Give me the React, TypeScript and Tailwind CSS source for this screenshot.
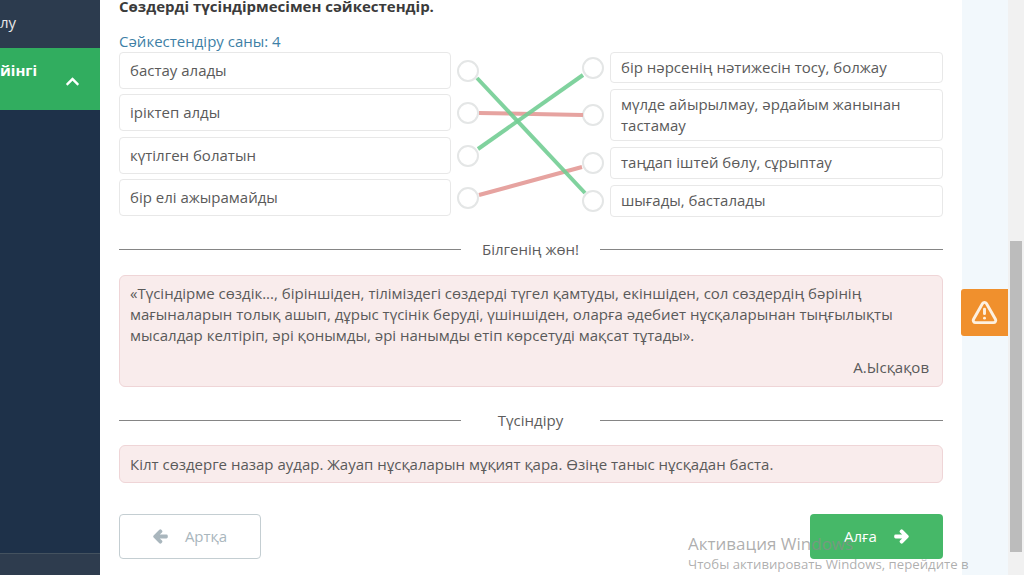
import { FaArrowLeft, FaArrowRight, FaChevronUp } from 'react-icons/fa';
import { LuTriangleAlert } from 'react-icons/lu';

const leftItems = ['бастау алады', 'іріктеп алды', 'күтілген болатын', 'бір елі ажырамайды'];

const rightItems = [
  { text: 'бір нәрсенің нәтижесін тосу, болжау', h: 'h-[31px]' },
  { text: 'мүлде айырылмау, әрдайым жанынан тастамау', h: 'h-[52px]' },
  { text: 'таңдап іштей бөлу, сұрыптау', h: 'h-[32px] pb-[1px]' },
  { text: 'шығады, басталады', h: 'h-[32px] pb-[1px]' },
];

function Circle() {
  return <div className="w-[22px] h-[22px] shrink-0 rounded-full border-2 border-[#e4e6e6] bg-white" />;
}

function Divider({ label }: { label: string }) {
  return (
    <div className="flex items-center h-[20px]">
      <div className="w-[342px] border-t border-[#858585]" />
      <div className="w-[139px] text-center text-[15px] text-[#5c5c5c]">{label}</div>
      <div className="flex-1 border-t border-[#858585]" />
    </div>
  );
}

export default function App() {
  return (
    <div className="relative flex w-[1024px] h-[575px] overflow-hidden bg-white font-['Open_Sans','Noto_Sans',sans-serif]">
      {/* Sidebar */}
      <aside className="w-[100px] shrink-0 flex flex-col bg-[#1e3149] text-white">
        <div className="h-[48px] bg-[#2c3b4e] text-[15px] pt-[11px] text-[#e8e8e8]">лу</div>
        <div className="h-[62px] bg-[#31ad5f] flex justify-between pl-0 pr-[20px]">
          <span className="text-[15px] font-bold pt-[12px] leading-[20px]">йінгі</span>
          <FaChevronUp className="mt-[26px] text-[15px]" />
        </div>
        <div className="flex-1" />
        <div className="h-[22px] bg-[#2e3c4e] border-t border-[#44525f]" />
      </aside>

      {/* Main content */}
      <main className="w-[862px] shrink-0 pl-[19px] pr-[19px] text-[#5a5a5a] text-[15px]">
        <div className="w-[824px] -mt-[4px]">
          <h1 className="text-[15px] font-bold text-[#3b3b3b] leading-[20px]">Сөздерді түсіндірмесімен сәйкестендір.</h1>
          <div className="mt-[15px] mb-[1px] h-[20px] leading-[20px] text-[#3e7fa6]">Сәйкестендіру саны: 4</div>

          <div className="relative flex justify-between">
            <div className="flex flex-col gap-[5px]">
              {leftItems.map((t, i) => (
                <div key={t} className={i === 2 ? 'flex items-center mt-[1px]' : 'flex items-center'}>
                  <div className="w-[332px] h-[37px] flex items-center px-[10px] rounded-[4px] border border-[#e8e8e8] bg-white">{t}</div>
                  <div className="ml-[6px]"><Circle /></div>
                </div>
              ))}
            </div>
            <div className="flex flex-col gap-[6px]">
              {rightItems.map(r => (
                <div key={r.text} className="flex items-center">
                  <div className="mr-[6px]"><Circle /></div>
                  <div className={`w-[333px] ${r.h} flex items-center px-[10px] rounded-[4px] border border-[#e8e8e8] bg-white leading-[21px]`}>{r.text}</div>
                </div>
              ))}
            </div>
            <svg className="absolute left-0 top-0 pointer-events-none" width="824" height="170" viewBox="119 52 824 170" fill="none" strokeWidth="4">
              <line x1="479" y1="113" x2="583" y2="115" stroke="#e6a3a0" />
              <line x1="479" y1="195" x2="582" y2="167" stroke="#e6a3a0" />
              <line x1="477" y1="78" x2="585" y2="193" stroke="#72cd94" opacity="0.9" />
              <line x1="478" y1="149" x2="583" y2="75" stroke="#72cd94" opacity="0.9" />
            </svg>
          </div>

          <div className="mt-[22px]"><Divider label="Білгенің жөн!" /></div>

          <div className="mt-[16px] h-[112px] rounded-[6px] border border-[#efd5d7] bg-[#f9ecec] px-[10px] pt-[7px] leading-[21px]">
            <p>«Түсіндірме сөздік..., біріншіден, тіліміздегі сөздерді түгел қамтуды, екіншіден, сол сөздердің бәрінің мағыналарын толық ашып, дұрыс түсінік беруді, үшіншіден, оларға әдебиет нұсқаларынан тыңғылықты мысалдар келтіріп, әрі қонымды, әрі нанымды етіп көрсетуді мақсат тұтады».</p>
            <p className="mt-[11px] text-right pr-[3px]">А.Ысқақов</p>
          </div>

          <div className="mt-[23px]"><Divider label="Түсіндіру" /></div>

          <div className="mt-[15px] h-[38px] flex items-center rounded-[6px] border border-[#efd5d7] bg-[#f9ecec] px-[10px]">
            Кілт сөздерге назар аудар. Жауап нұсқаларын мұқият қара. Өзіңе таныс нұсқадан баста.
          </div>

          <div className="mt-[31px] flex justify-between">
            <button className="w-[142px] h-[45px] flex items-center justify-center gap-[17px] rounded-[4px] border border-[#c4ced2] bg-white text-[#a9b6bd]">
              <FaArrowLeft className="text-[15px]" stroke="currentColor" strokeWidth={50} />
              <span>Артқа</span>
            </button>
            <button className="w-[133px] h-[45px] flex items-center justify-center gap-[17px] rounded-[4px] bg-[#46b868] text-white text-[15px]">
              <span>Алға</span>
              <FaArrowRight className="text-[15px]" stroke="currentColor" strokeWidth={50} />
            </button>
          </div>
        </div>
      </main>

      {/* Right band and scrollbar */}
      <div className="w-[46px] shrink-0 bg-[#f2f8fc]" />
      <div className="flex-1 bg-[#f1f1f1] pl-[2px] pr-[2px] pt-[241px]">
        <div className="h-[311px] bg-[#bcbcbc]" />
      </div>

      {/* Report tab */}
      <div className="absolute left-[961px] top-[289px] w-[47px] h-[47px] flex items-center justify-center rounded-l-[3px] bg-[#f0902d] text-[#fdf0e0]">
        <LuTriangleAlert size={27} strokeWidth={2.6} />
      </div>

      {/* Windows watermark */}
      <div className="absolute left-[688px] top-[532px] whitespace-nowrap text-[#8c8c8c]/70 pointer-events-none">
        <div className="text-[17px] leading-[23px]">Активация Windows</div>
        <div className="text-[13.2px] leading-[18px]">Чтобы активировать Windows, перейдите в</div>
      </div>
    </div>
  );
}
